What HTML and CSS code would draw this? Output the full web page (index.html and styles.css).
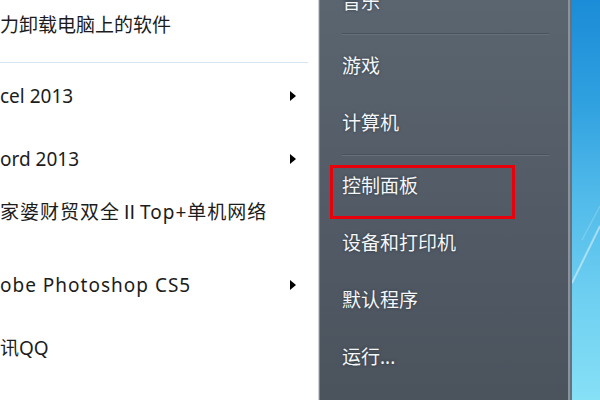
FILE: index.html
```html
<!DOCTYPE html>
<html lang="zh-CN">
<head>
    <meta charset="UTF-8">
    <title>开始菜单</title>
    <link rel="stylesheet" href="styles.css">
</head>
<body>
    <div class="start-menu">
        <!-- program list (white) -->
        <div class="programs">
            <div class="prog prog-top">力卸载电脑上的软件</div>
            <div class="prog-sep"></div>
            <div class="prog">
                <span class="prog-name">cel 2013</span>
                <span class="arrow"></span>
            </div>
            <div class="prog">
                <span class="prog-name">ord 2013</span>
                <span class="arrow"></span>
            </div>
            <div class="prog prog-two-line">
                <span class="prog-name wide">家婆财贸双全<span class="cjk">Ⅱ</span>Top+单机网络</span>
            </div>
            <div class="prog">
                <span class="prog-name wide">obe Photoshop CS5</span>
                <span class="arrow"></span>
            </div>
            <div class="prog">
                <span class="prog-name">讯QQ</span>
            </div>
        </div>

        <!-- places (dark) -->
        <div class="places">
            <div class="place place-cut">音乐</div>
            <div class="place-sep"></div>
            <div class="place">游戏</div>
            <div class="place">计算机</div>
            <div class="place-sep"></div>
            <div class="place place-marked">
                控制面板
                <span class="mark"></span>
            </div>
            <div class="place">设备和打印机</div>
            <div class="place">默认程序</div>
            <div class="place">运行...</div>
        </div>
        <div class="places-edge"></div>

        <!-- desktop wallpaper -->
        <div class="desktop">
            <svg class="streaks" viewBox="0 0 28 400" preserveAspectRatio="none">
                <line x1="28" y1="226" x2="0" y2="283" stroke="rgba(255,255,255,0.45)" stroke-width="2"/>
                <line x1="28" y1="206" x2="10" y2="240" stroke="rgba(255,255,255,0.18)" stroke-width="1.5"/>
            </svg>
        </div>
    </div>
</body>
</html>
```

FILE: styles.css
```css
* {
    margin: 0;
    padding: 0;
    box-sizing: border-box;
}

body {
    width: 600px;
    height: 400px;
    overflow: hidden;
    font-family: "Noto Sans", "Noto Sans CJK SC", sans-serif;
    font-size: 19px;
    line-height: 1;
}

.cjk {
    font-family: "Noto Sans CJK SC", sans-serif;
}

.start-menu {
    display: flex;
    height: 400px;
}

/* Left white program list */
.programs {
    width: 318px;
    background-color: #ffffff;
    color: #1c1c1c;
    padding-right: 10px;
}

.prog {
    height: 63px;
    display: flex;
    align-items: center;
    justify-content: space-between;
    white-space: nowrap;
    padding-bottom: 3px;
}

.prog-top {
    height: 54px;
}

.prog-two-line {
    align-items: flex-start;
    padding-top: 9px;
}

.prog-name.wide {
    letter-spacing: 1px;
}

.prog-sep {
    height: 1px;
    margin: 8px 0 3px 0;
    background-color: #d5e3f3;
}

.arrow {
    width: 0;
    height: 0;
    margin-right: 12px;
    border-top: 5px solid transparent;
    border-bottom: 5px solid transparent;
    border-left: 6px solid #000000;
}

/* Right dark places column */
.places {
    width: 250px;
    background: linear-gradient(180deg, #5b6570 0%, #535c67 45%, #4b535d 100%);
    border-left: 1px solid #cdd1d5;
    box-shadow: inset 1px 0 0 #7b848e;
    color: #f4f6f8;
    padding-left: 23px;
    overflow: hidden;
}

.place {
    height: 57px;
    display: flex;
    align-items: center;
    padding-bottom: 3px;
    text-shadow: 0 0 3px rgba(20, 30, 40, 0.6);
    position: relative;
}

.place-cut {
    margin-top: -25px;
}

.place-sep {
    height: 2px;
    width: 207px;
    margin: 1px 0 4px 0;
    border-top: 1px solid #4a525b;
    border-bottom: 1px solid #66707a;
}

.place-marked {
    margin-top: -1px;
}

/* red annotation box */
.mark {
    position: absolute;
    left: -12px;
    top: 6px;
    width: 185px;
    height: 54px;
    border: 3px solid #e8000b;
}

.places-edge {
    width: 4px;
    background: linear-gradient(90deg, #8a939c 0, #8a939c 2px, #69727c 2px);
}

/* Wallpaper strip */
.desktop {
    flex: 1;
    position: relative;
    background: linear-gradient(180deg, #1b8cd7 0%, #2fa0df 25%, #52bbea 50%, #6fd0f1 75%, #86e0f6 100%);
}

.streaks {
    position: absolute;
    top: 0;
    left: 0;
    width: 100%;
    height: 100%;
}
```
